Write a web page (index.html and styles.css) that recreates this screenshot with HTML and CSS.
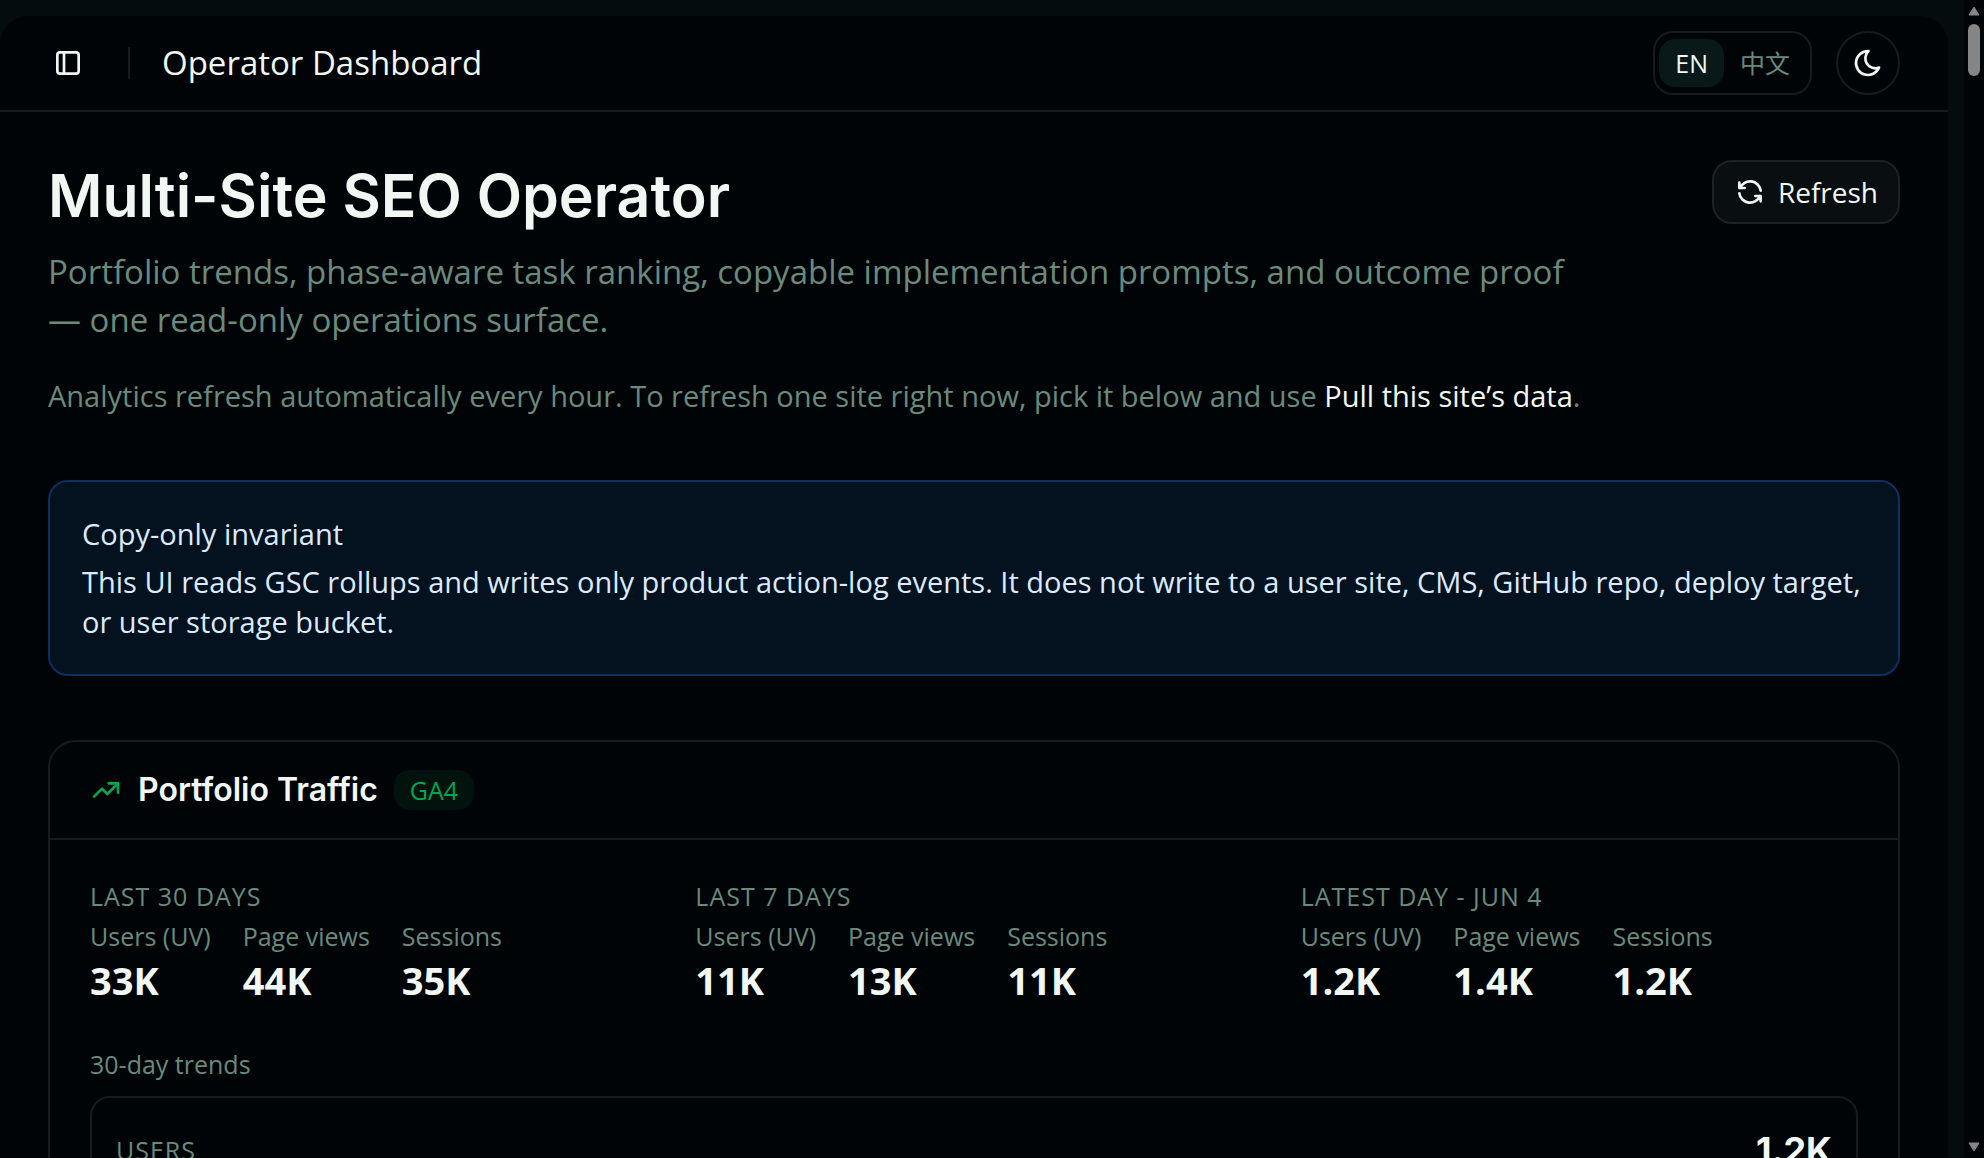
FILE: index.html
```html
<!DOCTYPE html>
<html lang="en">
<head>
<meta charset="utf-8">
<meta name="viewport" content="width=device-width, initial-scale=1">
<title>Operator Dashboard</title>
<link rel="stylesheet" href="styles.css">
</head>
<body>
<div class="app">
  <div class="panel">
    <header class="topbar">
      <button class="icon-button" type="button" aria-label="Toggle sidebar">
        <svg class="icon" viewBox="0 0 24 24"><rect x="4" y="4" width="16" height="16" rx="2"/><path d="M9 4v16"/></svg>
      </button>
      <span class="divider"></span>
      <span class="page-name">Operator Dashboard</span>
      <div class="lang" role="group" aria-label="Language">
        <button class="lang-option active" type="button">EN</button>
        <button class="lang-option" type="button" lang="zh">中文</button>
      </div>
      <button class="theme-button" type="button" aria-label="Toggle theme">
        <svg class="icon" viewBox="0 0 24 24"><path d="M12 3c.132 0 .263 0 .393 0a7.500 7.500 0 0 0 7.920 12.446a9 9 0 1 1 -8.313 -12.454z"/></svg>
      </button>
    </header>
    <main class="content">
      <section class="intro">
        <div class="intro-text">
          <h1>Multi-Site SEO Operator</h1>
          <p class="lead">Portfolio trends, phase-aware task ranking, copyable implementation prompts, and outcome proof — one read-only operations surface.</p>
          <p class="hint">Analytics refresh automatically every hour. To refresh one site right now, pick it below and use <strong>Pull this site’s data</strong>.</p>
        </div>
        <button class="refresh" type="button">
          <svg class="icon" viewBox="0 0 24 24"><path d="M20 11a8.100 8.100 0 0 0 -15.500 -2m-.5 -4v4h4"/><path d="M4 13a8.100 8.100 0 0 0 15.500 2m.5 4v-4h-4"/></svg>
          Refresh
        </button>
      </section>
      <section class="notice">
        <h2>Copy-only invariant</h2>
        <p>This UI reads GSC rollups and writes only product action-log events. It does not write to a user site, CMS, GitHub repo, deploy target, or user storage bucket.</p>
      </section>
      <section class="card">
        <div class="card-head">
          <svg class="icon trend" viewBox="0 0 24 24"><path d="M3 17l6 -6l4 4l8 -8"/><path d="M14 7l7 0l0 7"/></svg>
          <h2>Portfolio Traffic</h2>
          <span class="badge">GA4</span>
        </div>
        <div class="card-body">
          <div class="periods">
            <div>
              <h3>Last 30 days</h3>
              <dl class="metrics">
                <div><dt>Users (UV)</dt><dd>33K</dd></div>
                <div><dt>Page views</dt><dd>44K</dd></div>
                <div><dt>Sessions</dt><dd>35K</dd></div>
              </dl>
            </div>
            <div>
              <h3>Last 7 days</h3>
              <dl class="metrics">
                <div><dt>Users (UV)</dt><dd>11K</dd></div>
                <div><dt>Page views</dt><dd>13K</dd></div>
                <div><dt>Sessions</dt><dd>11K</dd></div>
              </dl>
            </div>
            <div>
              <h3>Latest day - Jun 4</h3>
              <dl class="metrics">
                <div><dt>Users (UV)</dt><dd>1.2K</dd></div>
                <div><dt>Page views</dt><dd>1.4K</dd></div>
                <div><dt>Sessions</dt><dd>1.2K</dd></div>
              </dl>
            </div>
          </div>
          <p class="trends-title">30-day trends</p>
          <div class="trend-box">
            <span class="trend-name">Users</span>
            <span class="trend-value">1.2K</span>
          </div>
        </div>
      </section>
    </main>
  </div>
  <div class="scrollbar" aria-hidden="true">
    <svg class="arrow" viewBox="0 0 12 10"><path d="M6 1 11 9H1Z"/></svg>
    <span class="thumb"></span>
    <svg class="arrow" viewBox="0 0 12 10"><path d="M6 9 1 1H11Z"/></svg>
  </div>
</div>
</body>
</html>
```
FILE: styles.css
```css
:root {
  --bg: #040c0d;
  --surface: #000406;
  --line: #171b1e;
  --text: #f1f7f3;
  --muted: #6b8a7c;
  --green: #00a651;
  --info: #dbeafe;
}

* {
  box-sizing: border-box;
}

body {
  margin: 0;
  background: var(--bg);
  color: var(--text);
  font-family: "Open Sans", "Noto Sans", "Noto Sans CJK SC", sans-serif;
  font-size: 29px;
  line-height: 40px;
}

h1, h2, h3, p, dl, dd {
  margin: 0;
}

button {
  font: inherit;
  color: inherit;
  background: none;
  border: 0;
  padding: 0;
}

.app {
  display: grid;
  grid-template-columns: minmax(0, 1fr) 20px;
  column-gap: 16px;
  height: 100vh;
  overflow: hidden;
}

.panel {
  margin-top: 16px;
  background: var(--surface);
  border-radius: 28px 28px 0 0;
}

.icon {
  display: block;
  flex: none;
  width: 32px;
  height: 32px;
  fill: none;
  stroke: currentColor;
  stroke-width: 2;
  stroke-linecap: round;
  stroke-linejoin: round;
}

.topbar {
  display: flex;
  align-items: center;
  height: 96px;
  padding: 0 48px 0 40px;
  border-bottom: 2px solid var(--line);
}

.icon-button {
  display: grid;
  place-items: center;
  width: 56px;
  height: 56px;
}

.divider {
  width: 2px;
  height: 32px;
  margin: 0 32px;
  background: var(--line);
}

.page-name {
  flex: 1;
  font-size: 33px;
}

.lang {
  display: flex;
  align-items: center;
  height: 64px;
  padding: 0 4px;
  border: 2px solid var(--line);
  border-radius: 20px;
}

.lang-option {
  height: 48px;
  padding: 0 16px;
  border-radius: 16px;
  color: var(--muted);
  font-size: 25px;
}

.lang-option.active {
  background: #091818;
  color: var(--text);
}

.theme-button {
  display: grid;
  place-items: center;
  width: 64px;
  height: 64px;
  margin-left: 24px;
  border: 2px solid var(--line);
  border-radius: 50%;
}

.content {
  display: flex;
  flex-direction: column;
  gap: 64px;
  padding: 48px;
}

.intro {
  display: flex;
  justify-content: space-between;
  align-items: flex-start;
}

.intro-text {
  max-width: 1536px;
}

h1 {
  font: 600 59px/72px Inter, sans-serif;
}

.lead {
  margin-top: 16px;
  color: var(--muted);
  font-size: 33px;
  line-height: 48px;
}

.hint {
  margin-top: 32px;
  color: var(--muted);
}

.hint strong {
  color: var(--text);
  font-weight: 400;
}

.refresh {
  display: flex;
  align-items: center;
  gap: 12px;
  height: 64px;
  padding: 0 20px;
  border: 2px solid #1d2224;
  border-radius: 20px;
  background: #090e10;
  font-size: 28px;
}

.notice {
  padding: 32px;
  border: 2px solid #0f2f60;
  border-radius: 20px;
  background: #04111f;
  color: var(--info);
}

.notice h2 {
  font-size: 29px;
  font-weight: 400;
}

.notice p {
  margin-top: 8px;
}

.card {
  border: 2px solid var(--line);
  border-radius: 28px;
}

.card-head {
  display: flex;
  align-items: center;
  gap: 16px;
  height: 98px;
  padding: 0 40px;
  border-bottom: 2px solid var(--line);
}

.card-head h2 {
  font: 600 32px/40px Inter, sans-serif;
}

.trend {
  color: var(--green);
}

.badge {
  padding: 0 16px;
  border-radius: 16px;
  background: #02130e;
  color: var(--green);
  font-size: 25px;
}

.card-body {
  padding: 36px 40px 40px;
  color: var(--muted);
  font-size: 25px;
}

.periods {
  display: grid;
  grid-template-columns: repeat(3, minmax(0, 1fr));
  gap: 48px;
}

h3 {
  font-size: 25px;
  font-weight: 400;
  letter-spacing: 1px;
  text-transform: uppercase;
}

.metrics {
  display: flex;
  gap: 32px;
}

dd {
  color: var(--text);
  font-size: 38px;
  font-weight: 700;
  line-height: 48px;
}

.trends-title {
  margin-top: 40px;
}

.trend-box {
  display: flex;
  justify-content: space-between;
  align-items: flex-start;
  height: 320px;
  margin-top: 12px;
  padding: 32px 24px;
  border: 2px solid var(--line);
  border-radius: 20px;
}

.trend-name {
  letter-spacing: 1px;
  text-transform: uppercase;
}

.trend-value {
  color: var(--text);
  font: 700 36px/40px Inter, sans-serif;
}

.scrollbar {
  display: flex;
  flex-direction: column;
  align-items: center;
  height: 100vh;
  padding: 6px 0;
  background: var(--surface);
  color: #858585;
}

.arrow {
  width: 12px;
  height: 10px;
  fill: currentColor;
  stroke: currentColor;
  stroke-linejoin: round;
}

.thumb {
  width: 12px;
  height: 52px;
  margin: 8px 0 auto;
  border-radius: 6px;
  background: currentColor;
}
```
